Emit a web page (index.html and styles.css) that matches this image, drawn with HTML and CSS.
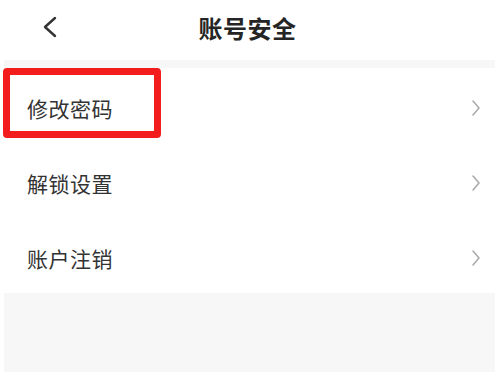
FILE: index.html
```html
<!DOCTYPE html>
<html lang="zh">
<head>
<meta charset="utf-8">
<link rel="stylesheet" href="styles.css">
</head>
<body>
<div class="page">
  <header class="nav">
    <span class="back">
      <svg width="16" height="22" viewBox="0 0 16 22"><path d="M13 2 L3 11 L13 20" fill="none" stroke="#333" stroke-width="2.4" stroke-linecap="round" stroke-linejoin="round"/></svg>
    </span>
    <h1 class="title">账号安全</h1>
  </header>
  <div class="band"></div>
  <ul class="list">
    <li class="item">
      <span class="label">修改密码</span>
      <svg class="arrow" width="10" height="18" viewBox="0 0 10 18"><path d="M2 2 L8 9 L2 16" fill="none" stroke="#ababab" stroke-width="1.6" stroke-linecap="round" stroke-linejoin="round"/></svg>
      <span class="highlight"></span>
    </li>
    <li class="item">
      <span class="label">解锁设置</span>
      <svg class="arrow" width="10" height="18" viewBox="0 0 10 18"><path d="M2 2 L8 9 L2 16" fill="none" stroke="#ababab" stroke-width="1.6" stroke-linecap="round" stroke-linejoin="round"/></svg>
    </li>
    <li class="item">
      <span class="label">账户注销</span>
      <svg class="arrow" width="10" height="18" viewBox="0 0 10 18"><path d="M2 2 L8 9 L2 16" fill="none" stroke="#ababab" stroke-width="1.6" stroke-linecap="round" stroke-linejoin="round"/></svg>
    </li>
  </ul>
  <div class="rest"></div>
</div>
</body>
</html>
```

FILE: styles.css
```css
* { box-sizing: border-box; }
html, body {
  margin: 0;
  padding: 0;
  background: #ffffff;
  font-family: "Noto Sans CJK SC", "Noto Sans", sans-serif;
}
.page {
  width: 495px;
  height: 372px;
  display: flex;
  flex-direction: column;
  overflow: hidden;
}
.nav {
  height: 60px;
  position: relative;
  display: flex;
  align-items: center;
  justify-content: center;
  padding-bottom: 5px;
}
.back {
  position: absolute;
  left: 42px;
  top: 16px;
  display: flex;
}
.title {
  margin: 0;
  font-size: 24px;
  line-height: 30px;
  font-weight: 700;
  color: #252525;
  letter-spacing: 0.5px;
}
.band {
  height: 8px;
  margin-left: 4px;
  background: #f7f7f7;
}
.list {
  list-style: none;
  margin: 0;
  padding: 0;
}
.item {
  position: relative;
  height: 75px;
  display: flex;
  align-items: center;
  justify-content: space-between;
  padding: 4px 14px 0 27px;
}
.label {
  font-size: 21px;
  color: #333333;
  letter-spacing: 0.5px;
}
.arrow { display: block; }
.highlight {
  position: absolute;
  left: 3px;
  top: 0;
  width: 158px;
  height: 70px;
  border: 7px solid #f41d1d;
  border-radius: 4px;
}
.rest {
  flex: 1;
  margin-left: 4px;
  background: #f7f7f7;
}
```
